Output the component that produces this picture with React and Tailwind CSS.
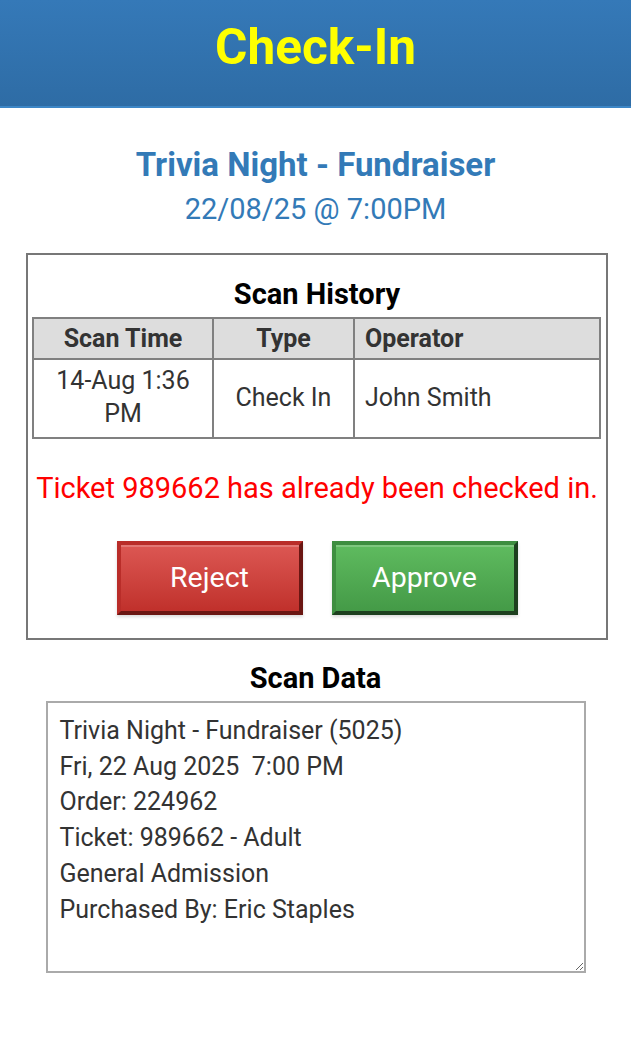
import React from "react";

const scanData = `Trivia Night - Fundraiser (5025)
Fri, 22 Aug 2025  7:00 PM
Order: 224962
Ticket: 989662 - Adult
General Admission
Purchased By: Eric Staples`;

export default function App() {
  return (
    <div className="min-h-screen bg-white font-['Roboto','Liberation_Sans',sans-serif]">
      {/* Header bar */}
      <header className="flex h-[108px] items-center justify-center border-b-2 border-[#3d86c6] bg-gradient-to-b from-[#3579b8] to-[#2e6ca5] pb-[10px]">
        <h1 className="text-[49.5px] font-bold leading-none text-[#ffff00]">Check-In</h1>
      </header>

      {/* Event info */}
      <div className="mt-[35px] text-center text-[#337ab7]">
        <h2 className="text-[33px] font-bold leading-[44px]">Trivia Night - Fundraiser</h2>
        <p className="text-[29px] leading-[44px]">22/08/25 @ 7:00PM</p>
      </div>

      {/* Scan history box */}
      <div className="ml-[26px] mt-[22px] w-[582px] border-2 border-[#777777] px-[4px] pb-[23px] pt-[19px]">
        <h3 className="text-center text-[29px] font-bold leading-[40px] text-black">Scan History</h3>
        <table className="mt-[3px] w-[569px] table-fixed border-collapse border-2 border-[#808080] text-[25px] text-[#333333]">
          <colgroup>
            <col className="w-[180px]" />
            <col className="w-[141px]" />
            <col />
          </colgroup>
          <thead>
            <tr className="bg-[#dddddd]">
              <th className="h-[41px] border-2 border-[#808080] px-2 text-center font-bold leading-[34px]">Scan Time</th>
              <th className="border-2 border-[#808080] px-2 text-center font-bold leading-[34px]">Type</th>
              <th className="border-2 border-[#808080] px-[10px] text-left font-bold leading-[34px]">Operator</th>
            </tr>
          </thead>
          <tbody>
            <tr>
              <td className="h-[79px] border-2 border-[#808080] px-2 pb-[3px] text-center leading-[33px]">14-Aug 1:36 PM</td>
              <td className="border-2 border-[#808080] px-2 pb-[3px] text-center leading-[33px]">Check In</td>
              <td className="border-2 border-[#808080] px-[10px] pb-[3px] text-left leading-[33px]">John Smith</td>
            </tr>
          </tbody>
        </table>

        <p className="mt-[29px] text-center text-[29px] leading-[40px] text-[#ff0000]">
          Ticket 989662 has already been checked in.
        </p>

        <div className="mt-[33px] flex justify-center gap-[29px]">
          <button className="h-[74px] w-[186px] border-4 border-b-[#6a1612] border-l-[#b92d29] border-r-[#6a1612] border-t-[#b92d29] bg-gradient-to-b from-[#dc5753] to-[#c0302b] text-[28.5px] text-white shadow-[inset_0_2px_0_rgba(255,255,255,0.2),0_2px_3px_rgba(0,0,0,0.15)]">
            Reject
          </button>
          <button className="h-[74px] w-[186px] border-4 border-b-[#1d3f1e] border-l-[#3e8e40] border-r-[#1d3f1e] border-t-[#3e8e40] bg-gradient-to-b from-[#5fbb5f] to-[#449a47] text-[28.5px] text-white shadow-[inset_0_2px_0_rgba(255,255,255,0.2),0_2px_3px_rgba(0,0,0,0.15)]">
            Approve
          </button>
        </div>
      </div>

      {/* Scan data */}
      <h3 className="mt-[18px] text-center text-[29px] font-bold leading-[40px] text-black">Scan Data</h3>
      <div className="mt-[3px] flex justify-center">
        <textarea
          readOnly
          defaultValue={scanData}
          className="h-[272px] w-[540px] border-2 border-[#aaaaaa] pl-[12px] pr-[11px] pt-[10px] text-[25px] leading-[35.7px] text-[#333333] outline-none"
        />
      </div>
    </div>
  );
}
